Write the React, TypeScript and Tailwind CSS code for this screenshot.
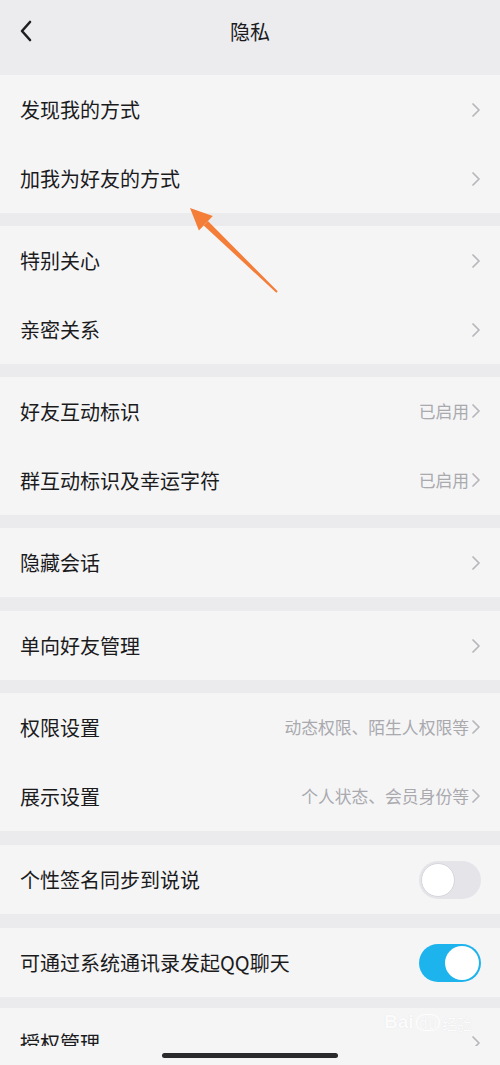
import React from 'react';

type Row = {
  label: string;
  value?: string;
  toggle?: 'on' | 'off';
};

const groups: { mt: string; rows: Row[] }[] = [
  { mt: 'mt-0', rows: [{ label: '发现我的方式' }, { label: '加我为好友的方式' }] },
  { mt: 'mt-[13px]', rows: [{ label: '特别关心' }, { label: '亲密关系' }] },
  {
    mt: 'mt-[13px]',
    rows: [
      { label: '好友互动标识', value: '已启用' },
      { label: '群互动标识及幸运字符', value: '已启用' },
    ],
  },
  { mt: 'mt-[13px]', rows: [{ label: '隐藏会话' }] },
  { mt: 'mt-[14px]', rows: [{ label: '单向好友管理' }] },
  {
    mt: 'mt-[13px]',
    rows: [
      { label: '权限设置', value: '动态权限、陌生人权限等' },
      { label: '展示设置', value: '个人状态、会员身份等' },
    ],
  },
  { mt: 'mt-[14px]', rows: [{ label: '个性签名同步到说说', toggle: 'off' }] },
  { mt: 'mt-[14px]', rows: [{ label: '可通过系统通讯录发起QQ聊天', toggle: 'on' }] },
  { mt: 'mt-[11px]', rows: [{ label: '授权管理' }] },
];

function Chevron() {
  return (
    <svg width="10" height="16" viewBox="0 0 10 16" className="shrink-0">
      <path d="M2 2 L8 8 L2 14" fill="none" stroke="#b6b6bb" strokeWidth="1.7" strokeLinecap="round" strokeLinejoin="round" />
    </svg>
  );
}

function Toggle({ on }: { on: boolean }) {
  return on ? (
    <div className="w-[62px] h-[38px] rounded-full bg-[#1db4ee] flex items-center justify-end p-[2px]">
      <div className="w-[34px] h-[34px] rounded-full bg-white" />
    </div>
  ) : (
    <div className="w-[62px] h-[38px] rounded-full bg-[#e4e4e9] flex items-center justify-start p-[2px]">
      <div className="w-[34px] h-[34px] rounded-full bg-white border border-[#d6d6dc]" />
    </div>
  );
}

function SettingRow({ row }: { row: Row }) {
  return (
    <div className="h-[69px] flex items-center justify-between pl-[20px] pr-[19px]">
      <span className="text-[20px] text-[#1b1b1d] leading-none">{row.label}</span>
      {row.toggle ? (
        <Toggle on={row.toggle === 'on'} />
      ) : (
        <div className="flex items-center gap-[2px]">
          {row.value && <span className="text-[16.8px] text-[#a9a9ae] leading-none">{row.value}</span>}
          <Chevron />
        </div>
      )}
    </div>
  );
}

export default function App() {
  return (
    <div
      className="relative w-[500px] h-[1065px] overflow-hidden bg-[#ebebee]"
      style={{ fontFamily: '"Noto Sans CJK SC", "Noto Sans", sans-serif' }}
    >
      {/* header */}
      <div className="h-[75px] flex items-center justify-center relative bg-[#ececef]">
        <svg width="14" height="22" viewBox="0 0 14 22" className="absolute left-[19px] top-[20px]">
          <path d="M11 2 L3 11 L11 20" fill="none" stroke="#1f1f21" strokeWidth="2.6" strokeLinecap="round" strokeLinejoin="round" />
        </svg>
        <span className="text-[20px] text-[#1b1b1d] -mt-[12px]">隐私</span>
      </div>

      {groups.map((g, i) => (
        <div key={i} className={`${g.mt} bg-[#f5f5f6]`}>
          {g.rows.map((r) => (
            <SettingRow key={r.label} row={r} />
          ))}
        </div>
      ))}

      {/* annotation arrow */}
      <svg width="500" height="1065" className="absolute left-0 top-0 pointer-events-none">
        <polygon points="190,208 212.8,216.1 198.9,230.5" fill="#f47d37" />
        <polygon points="207.9,221.1 203.7,225.5 276.3,292.7 277.7,291.3" fill="#f47d37" />
      </svg>

      {/* watermark */}
      <div className="absolute left-[384px] top-[1012px] flex items-end text-white/90 pointer-events-none" style={{ textShadow: '0 0 1px #d8d8dc' }}>
        <span className="text-[19px] font-bold leading-none" style={{ fontFamily: '"Liberation Sans", sans-serif' }}>
          Bai
        </span>
        <span className="text-[15px] leading-none ml-[2px] border border-white/90 rounded-full px-[2px]">du</span>
        <span className="text-[15px] leading-none ml-[2px]">经验</span>
      </div>

      {/* home indicator area */}
      <div className="absolute left-0 right-0 bottom-0 h-[19px] bg-[#f5f5f6] flex justify-center">
        <div className="mt-[7px] w-[176px] h-[5px] rounded-full bg-[#2a2a2c]" />
      </div>
    </div>
  );
}
